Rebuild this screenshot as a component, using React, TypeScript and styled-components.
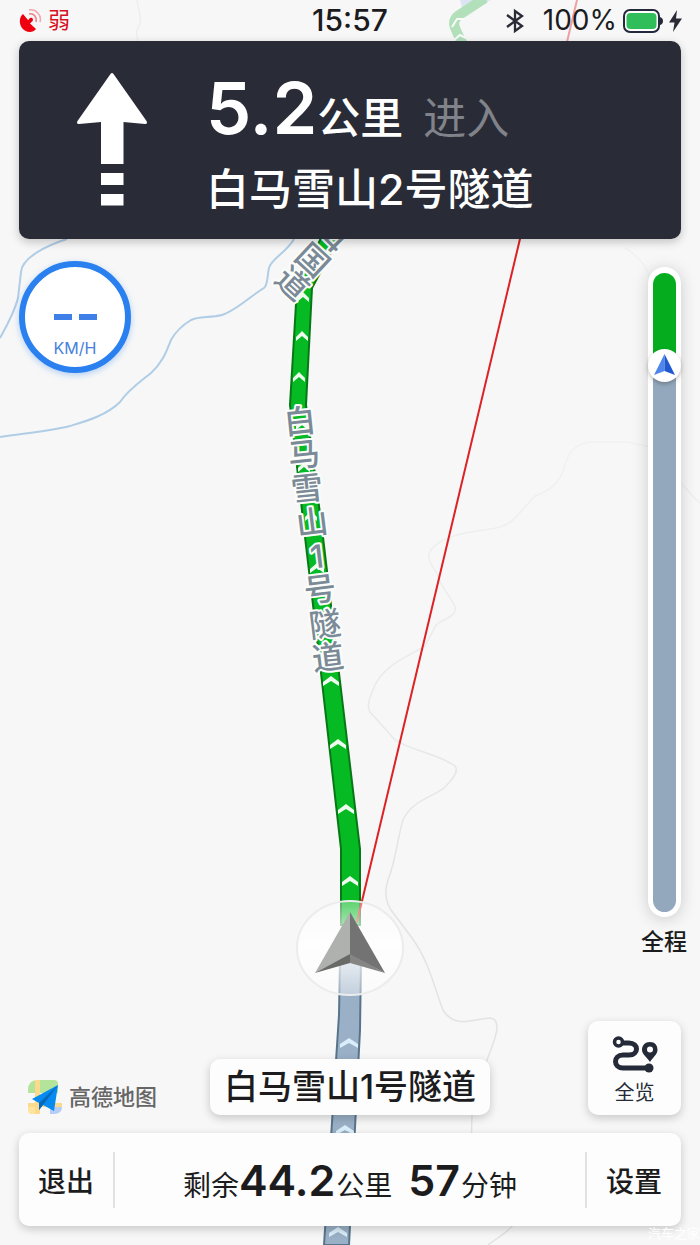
import React from "react";
import styled, { createGlobalStyle } from "styled-components";

const GlobalStyle = createGlobalStyle`
  *, *::before, *::after { box-sizing: border-box; }
  body {
    margin: 0;
    background: #f7f7f7;
    font-family: Inter, "Noto Sans CJK SC", sans-serif;
    color: #1c1c1e;
  }
  button { font: inherit; color: inherit; border: 0; cursor: pointer; }
`;

const Screen = styled.div`
  position: relative;
  display: flex;
  flex-direction: column;
  min-height: 100vh;
  overflow: hidden;
  isolation: isolate;
`;

const MapCanvas = styled.svg`
  position: absolute;
  inset: 0;
  width: 100%;
  height: 100%;
  z-index: -1;
`;

const MapLabel = styled.text`
  font-family: Inter, "Noto Sans CJK SC", sans-serif;
  font-size: 32px;
  font-weight: 500;
  fill: #7b8a97;
  stroke: #fbfdfb;
  stroke-width: 4px;
  stroke-linejoin: round;
  paint-order: stroke;
  text-anchor: middle;
`;

const StatusBar = styled.header`
  display: grid;
  grid-template-columns: 1fr auto 1fr;
  align-items: center;
  height: 41px;
  padding: 0 18px;
  background: rgba(247, 247, 247, 0.6);
  font-size: 28px;
  line-height: 41px;
`;

const Signal = styled.div`
  display: flex;
  align-items: center;
  gap: 6px;
  color: #d8101f;
  font-size: 22px;
`;

const Clock = styled.time`
  font-size: 30px;
  font-weight: 500;
`;

const Power = styled.div`
  display: flex;
  align-items: center;
  justify-content: flex-end;
  gap: 6px;
  font-size: 28px;
`;

const Percent = styled.span`
  margin-left: 12px;
`;

const Battery = styled.span`
  display: flex;
  align-items: center;
  gap: 6px;
`;

const Maneuver = styled.section`
  display: flex;
  align-items: center;
  gap: 59px;
  height: 198px;
  margin: 0 19px;
  padding: 0 58px;
  border-radius: 10px;
  background: #292c37;
  color: #fff;
  box-shadow: 0 3px 10px rgba(0, 0, 0, 0.22);
`;

const ManeuverText = styled.div`
  padding-top: 12px;
  font-size: 43px;
  font-weight: 500;
  white-space: nowrap;
`;

const DistanceLine = styled.p`
  display: flex;
  align-items: baseline;
  margin: 0;
  line-height: 76px;
`;

const Distance = styled.strong`
  font-size: 72px;
  font-weight: 600;
`;

const Enter = styled.span`
  margin-left: 20px;
  color: #81838b;
  font-weight: 400;
`;

const RoadLine = styled.p`
  margin: 0;
  line-height: 66px;
`;

const Body = styled.main`
  display: flex;
  flex: 1;
  justify-content: space-between;
  padding: 22px 13px 66px 19px;
`;

const Speed = styled.div`
  display: flex;
  flex-direction: column;
  align-items: center;
  justify-content: flex-end;
  gap: 18px;
  width: 112px;
  height: 112px;
  padding-bottom: 9px;
  border: 6px solid #2a80ee;
  border-radius: 50%;
  background: #fff;
  color: #467fe0;
  font-size: 16px;
  line-height: 20px;
  box-shadow: 0 2px 6px rgba(42, 128, 238, 0.35);
`;

const Dashes = styled.div`
  display: flex;
  gap: 7px;
`;

const Dash = styled.span`
  width: 18px;
  height: 6px;
  background: #3f80e8;
`;

const TripColumn = styled.div`
  display: flex;
  flex-direction: column;
  align-items: center;
  gap: 12px;
  padding-top: 6px;
  font-size: 23px;
  font-weight: 500;
  line-height: 26px;
`;

const Rail = styled.div`
  position: relative;
  display: flex;
  flex: 1;
  width: 33px;
  padding: 6px 5px 5px;
  border-radius: 17px;
  background: #fff;
  box-shadow: 0 2px 16px rgba(0, 0, 0, 0.18);
`;

const RailTrack = styled.div`
  flex: 1;
  border-radius: 12px;
  background: linear-gradient(#04ac1e 0 15%, #94a8bd 15% 100%);
`;

const RailMarker = styled.span`
  position: absolute;
  top: 15%;
  left: 0;
  display: grid;
  place-items: center;
  width: 33px;
  height: 33px;
  margin-top: -16px;
  border-radius: 50%;
  background: #fff;
  box-shadow: 0 2px 4px rgba(0, 0, 0, 0.25);
`;

const Tools = styled.section`
  display: grid;
  grid-template-columns: 1fr auto 1fr;
  align-items: end;
  padding: 0 19px;
`;

const Brand = styled.div`
  display: flex;
  align-items: center;
  gap: 6px;
  padding-left: 8px;
  color: #666;
  font-size: 22px;
  font-weight: 500;
  line-height: 36px;
`;

const card = `
  border-radius: 10px;
  background: #fdfdfd;
  box-shadow: 0 3px 10px rgba(0, 0, 0, 0.2);
`;

const CurrentRoad = styled.p`
  ${card}
  margin: 0;
  padding: 0 14px;
  font-size: 34px;
  font-weight: 500;
  line-height: 56px;
  white-space: nowrap;
`;

const Overview = styled.button`
  ${card}
  display: flex;
  flex-direction: column;
  align-items: center;
  justify-self: end;
  gap: 6px;
  width: 93px;
  height: 94px;
  padding: 14px 0 0;
  color: #252a38;
  font-size: 20px;
  line-height: 28px;
`;

const TripBar = styled.footer`
  ${card}
  display: flex;
  align-items: center;
  height: 93px;
  margin: 18px 19px 19px;
  font-size: 28px;
`;

const BarButton = styled.button`
  width: 94px;
  height: 93px;
  padding: 0;
  background: none;
  font-weight: 500;
`;

const Divider = styled.span`
  width: 2px;
  height: 56px;
  background: #e1e1e1;
`;

const Remaining = styled.p`
  display: flex;
  flex: 1;
  align-items: baseline;
  justify-content: center;
  margin: 0;
  padding-top: 6px;
  line-height: 56px;
  white-space: nowrap;
`;

const Figure = styled.strong<{ $spaced?: boolean }>`
  margin-right: 1px;
  margin-left: ${(p) => (p.$spaced ? 16 : 0)}px;
  font-size: 43px;
  font-weight: 600;
`;

const Watermark = styled.span`
  position: absolute;
  right: 0;
  bottom: 2px;
  color: #fff;
  font-size: 13px;
  line-height: 20px;
`;

const roadGlyphs = [
  { ch: "白", x: 300, y: 421, r: -6 },
  { ch: "马", x: 304, y: 454, r: -6 },
  { ch: "雪", x: 307, y: 488, r: -6 },
  { ch: "山", x: 312, y: 522, r: -7 },
  { ch: "1", x: 317, y: 556, r: -7 },
  { ch: "号", x: 320, y: 589, r: -7 },
  { ch: "隧", x: 325, y: 624, r: -7 },
  { ch: "道", x: 328, y: 657, r: -7 },
  { ch: "4", x: 335, y: 240, r: 45 },
  { ch: "国", x: 313, y: 260, r: 43 },
  { ch: "道", x: 293, y: 283, r: 43 },
];

const chevrons = [
  [303, 297, 6], [302, 336, 6], [299, 377, 6], [302, 425, 6], [304, 467, 6],
  [311, 516, 6], [317, 568, 7], [331, 681, 8], [338, 744, 8], [346, 809, 8], [350, 881, 8],
];
const passedChevrons = [[349, 1043, 9], [345, 1130, 9], [338, 1232, 9]];

const Chevron = ({ at, fill }: { at: number[]; fill: string }) => {
  const [x, y, w] = at;
  return (
    <path
      fill={fill}
      d={`M${x - w} ${y + 1}L${x} ${y - 5}L${x + w} ${y + 1}V${y + 5}L${x} ${y}L${x - w} ${y + 5}Z`}
    />
  );
};

const RouteMap = () => (
  <MapCanvas viewBox="0 0 700 1245" preserveAspectRatio="xMidYMid slice" aria-label="导航地图">
    <defs>
      <linearGradient id="halo" x1="0" y1="0" x2="0" y2="1">
        <stop offset="0" stopColor="#fff" stopOpacity=".35" />
        <stop offset=".45" stopColor="#fff" stopOpacity=".85" />
        <stop offset=".7" stopColor="#fff" stopOpacity=".7" />
        <stop offset="1" stopColor="#fff" stopOpacity=".4" />
      </linearGradient>
      <linearGradient id="track" gradientUnits="userSpaceOnUse" x1="0" y1="440" x2="0" y2="900">
        <stop offset="0" stopColor="#f0f1f1" />
        <stop offset="1" stopColor="#e2e3e3" />
      </linearGradient>
    </defs>
    <g fill="none" strokeWidth="1.5" stroke="url(#track)">
      <path d="M137 0C139 14 143 20 138 28C135 32 137 36 138 41" stroke="#dce0ea" />
      <path d="M700 503C685 490 672 470 650 447L628 442L590 442C575 444 568 452 564 468C560 482 552 490 535 496L515 518C505 530 485 529 465 533C445 537 432 545 429 554C427 564 438 570 440 582L455 606C457 618 445 617 436 625L425 646C405 658 385 665 375 685C370 697 366 706 370 712L395 740C410 750 438 754 455 766C459 771 454 778 445 787C434 797 412 800 403 820C397 840 396 860 388 880C384 892 386 902 391 910L412 938C429 961 435 990 443 1010C455 1030 475 1018 491 1018C502 1021 496 1037 487 1060L472 1115L471 1150" />
      <path d="M525 1200C517 1230 502 1234 488 1245M625 248C640 257 648 268 650 280" />
    </g>
    <g fill="none" stroke="#b0cde6" strokeWidth="2">
      <path d="M67 239C45 246 22 258 21 272L18 298C15 310 9 322 0 338" />
      <path d="M294 239C287 252 271 259 269 268C267 277 268 285 264 288C252 295 234 312 222 315C209 318 199 316 191 320C181 326 176 331 171 340C166 352 163 362 151 373C140 382 128 390 120 402C106 416 83 422 70 426C50 431 27 433 0 437" />
    </g>
    <path d="M460 0L462 7H473L491 0Z" fill="#b5c5ed" />
    <path d="M485 -2L459 15C451 21 453 26 463 44" fill="none" stroke="#4cbf62" strokeWidth="10" />
    <path d="M452 27L457 19L464 19M454 40L460 35L466 38" fill="none" stroke="#fff" strokeWidth="2" />
    <path
      d="M340 960L339 1015L324 1245H349L360 1030L361 960Z"
      fill="#9ab0c6"
      stroke="#58748b"
      strokeWidth="2"
    />
    {passedChevrons.map((c) => <Chevron key={c[1]} at={c} fill="#d9edfa" />)}
    <path
      d="M322 236L297 287L290 405L305 537L321 673L341 849V925H360V849L339 673L323 537L306 405L312 288L340 236Z"
      fill="#05ba22"
      stroke="#087817"
      strokeWidth="2"
    />
    {chevrons.map((c) => <Chevron key={c[1]} at={c} fill="#eefcef" />)}
    <path d="M577 0L357 922" stroke="#dc2226" strokeWidth="2" />
    {roadGlyphs.map((g) => (
      <MapLabel key={`${g.ch}${g.y}`} transform={`translate(${g.x} ${g.y}) rotate(${g.r})`} y="12">
        {g.ch}
      </MapLabel>
    ))}
    <ellipse cx="350" cy="948" rx="53" ry="47" fill="url(#halo)" stroke="#ececec" strokeWidth="2" />
    <path d="M350 912L315 973L350 955Z" fill="#afb1af" />
    <path d="M350 912L385 973L350 955Z" fill="#737373" />
    <path d="M315 973L350 954V963Z" fill="#696966" />
    <path d="M385 973L350 954V963Z" fill="#858583" />
  </MapCanvas>
);

const SatelliteIcon = () => (
  <svg width="24" height="24" viewBox="0 0 24 24" fill="none" aria-hidden="true">
    <path d="M5 5C1 8 1 15 4 19C8 24 15 24 18 20L12 14.500L14 12.500A2 2 0 1 0 11 10.500L10 11Z" fill="#f0000f" />
    <path d="M11 5C16 4 19 8 18 13" stroke="#ef7f86" strokeWidth="1.500" />
    <path d="M11 1C18 0 24 6 22 13" stroke="#f3a7ab" strokeWidth="1.500" />
  </svg>
);

const BluetoothIcon = () => (
  <svg width="20" height="26" viewBox="0 0 20 26" fill="none" aria-label="蓝牙">
    <path d="M2 7L17 18L10 23V3L17 8L2 19" stroke="#292c37" strokeWidth="2.300" />
  </svg>
);

const BatteryIcon = () => (
  <svg width="40" height="24" viewBox="0 0 40 24" aria-label="电池">
    <rect x="1" y="1" width="35" height="22" rx="6" fill="#fff" stroke="#23283a" strokeWidth="2" />
    <rect x="3.500" y="4" width="30" height="16" rx="4" fill="#2fbe5a" />
    <path d="M37 8Q40 9 40 12T37 16Z" fill="#23283a" />
  </svg>
);

const BoltIcon = () => (
  <svg width="13" height="24" viewBox="0 0 13 24" aria-label="充电中">
    <path d="M8 1L0 13.500H5.500L4 23L13 9.500H7Z" fill="#292c37" />
  </svg>
);

const StraightIcon = () => (
  <svg width="70" height="134" viewBox="0 0 70 134" fill="#fff" aria-label="直行">
    <path d="M33.500 1Q35 -1 36.500 1L69.500 48Q71 51 68 51L46.500 49V91H24V49L2 51Q-1 51 .500 48Z" />
    <path d="M24 100H46.500V112H24ZM24 121H46.500V132.500H24Z" />
  </svg>
);

const PositionIcon = () => (
  <svg width="21" height="22" viewBox="0 0 21 22" aria-hidden="true">
    <path d="M10.500 0L0 21L10.500 17Z" fill="#4f86ec" />
    <path d="M10.500 0L21 21L10.500 17Z" fill="#2058cf" />
  </svg>
);

const RouteIcon = () => (
  <svg width="46" height="38" viewBox="0 0 46 38" fill="none" aria-hidden="true">
    <path d="M9 8H17C27 8 27 20 17 20H11C1 20 1 33 11 33H36" stroke="#252a38" strokeWidth="5" />
    <circle cx="6.500" cy="7" r="4" fill="#fff" stroke="#252a38" strokeWidth="3.500" />
    <circle cx="37" cy="33" r="4.500" fill="#252a38" />
    <path d="M38 7C33 7 30 10.500 30 15C30 19.500 35 22 38 27C41 22 45.500 19.500 45.500 15C45.500 10.500 43 7 38 7Z" fill="#252a38" />
    <circle cx="38" cy="14.500" r="3" fill="#fff" />
  </svg>
);

const BrandIcon = () => (
  <svg width="36" height="36" viewBox="0 0 36 36" aria-hidden="true">
    <path d="M11 1H27Q31 1 31 5V14H1V11Q1 1 11 1Z" fill="#b4e49a" />
    <path d="M8 1H13V35H8ZM1 24H35V28H1Z" fill="#fbd98d" />
    <path d="M1 28H8V35H4Q1 35 1 31Z" fill="#ffe49f" />
    <path d="M23 28H35Q35 35 27 35H23Z" fill="#b5cdf7" />
    <path d="M31 6L5 20L12 24V31L16 26L27 32Z" fill="#078bf0" />
    <path d="M31 6L12 24V31L16 26Z" fill="#0768bb" />
  </svg>
);

export default function App() {
  return (
    <Screen>
      <GlobalStyle />
      <RouteMap />
      <StatusBar>
        <Signal><SatelliteIcon /><span>弱</span></Signal>
        <Clock>15:57</Clock>
        <Power>
          <BluetoothIcon />
          <Percent>100%</Percent>
          <Battery><BatteryIcon /><BoltIcon /></Battery>
        </Power>
      </StatusBar>
      <Maneuver>
        <StraightIcon />
        <ManeuverText>
          <DistanceLine><Distance>5.2</Distance>公里<Enter>进入</Enter></DistanceLine>
          <RoadLine>白马雪山2号隧道</RoadLine>
        </ManeuverText>
      </Maneuver>
      <Body>
        <Speed>
          <Dashes><Dash /><Dash /></Dashes>
          <span>KM/H</span>
        </Speed>
        <TripColumn>
          <Rail>
            <RailTrack />
            <RailMarker><PositionIcon /></RailMarker>
          </Rail>
          <span>全程</span>
        </TripColumn>
      </Body>
      <Tools>
        <Brand><BrandIcon /><span>高德地图</span></Brand>
        <CurrentRoad>白马雪山1号隧道</CurrentRoad>
        <Overview type="button"><RouteIcon /><span>全览</span></Overview>
      </Tools>
      <TripBar>
        <BarButton type="button">退出</BarButton>
        <Divider />
        <Remaining>
          剩余<Figure>44.2</Figure>公里<Figure $spaced>57</Figure>分钟
        </Remaining>
        <Divider />
        <BarButton type="button">设置</BarButton>
      </TripBar>
      <Watermark>汽车之家</Watermark>
    </Screen>
  );
}
